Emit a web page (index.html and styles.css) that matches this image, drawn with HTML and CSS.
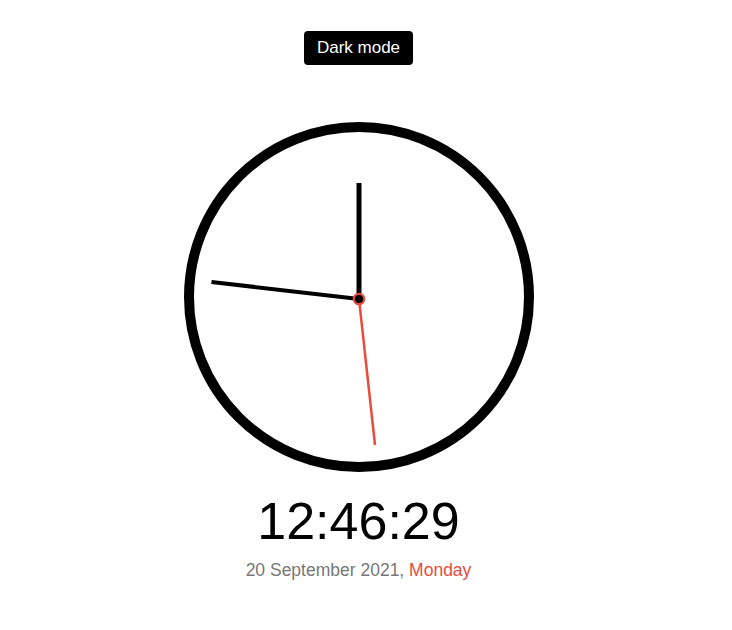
FILE: index.html
```html
<!DOCTYPE html>
<html lang="en">
<head>
<meta charset="utf-8">
<title>Clock</title>
<link rel="stylesheet" href="styles.css">
</head>
<body>
<main class="app">
  <button class="toggle" type="button">Dark mode</button>
  <div class="clock">
    <svg class="face" width="350" height="350" viewBox="0 0 350 350">
      <circle cx="175" cy="175" r="170" fill="none" stroke="#000" stroke-width="10"/>
      <line x1="175" y1="177" x2="175" y2="61" stroke="#000" stroke-width="5"/>
      <line x1="175" y1="177" x2="27.5" y2="160" stroke="#000" stroke-width="4"/>
      <line x1="175" y1="177" x2="191" y2="323" stroke="#e74c3c" stroke-width="2.5"/>
      <circle cx="175" cy="177" r="5.2" fill="#000" stroke="#e74c3c" stroke-width="2.2"/>
    </svg>
  </div>
  <div class="time">12:46:29</div>
  <div class="date">20 September 2021, <span class="day">Monday</span></div>
</main>
</body>
</html>
```
FILE: styles.css
```css
html, body {
  margin: 0;
  padding: 0;
  background: #fff;
}
body {
  font-family: "Liberation Sans", Arial, sans-serif;
}
.app {
  display: flex;
  flex-direction: column;
  align-items: center;
  padding-top: 31px;
  padding-right: 15px;
}
.toggle {
  height: 34px;
  padding: 0 13px;
  background: #000;
  color: #fff;
  border: none;
  border-radius: 4px;
  font-family: "Liberation Sans", Arial, sans-serif;
  font-size: 17px;
}
.clock {
  margin-top: 57px;
  width: 350px;
  height: 350px;
}
.face {
  display: block;
}
.time {
  margin-top: 19px;
  font-size: 52px;
  line-height: 60px;
  color: #000;
}
.date {
  margin-top: 10px;
  font-size: 17.5px;
  line-height: 19px;
  color: #777;
}
.day {
  color: #e74c3c;
}
```
